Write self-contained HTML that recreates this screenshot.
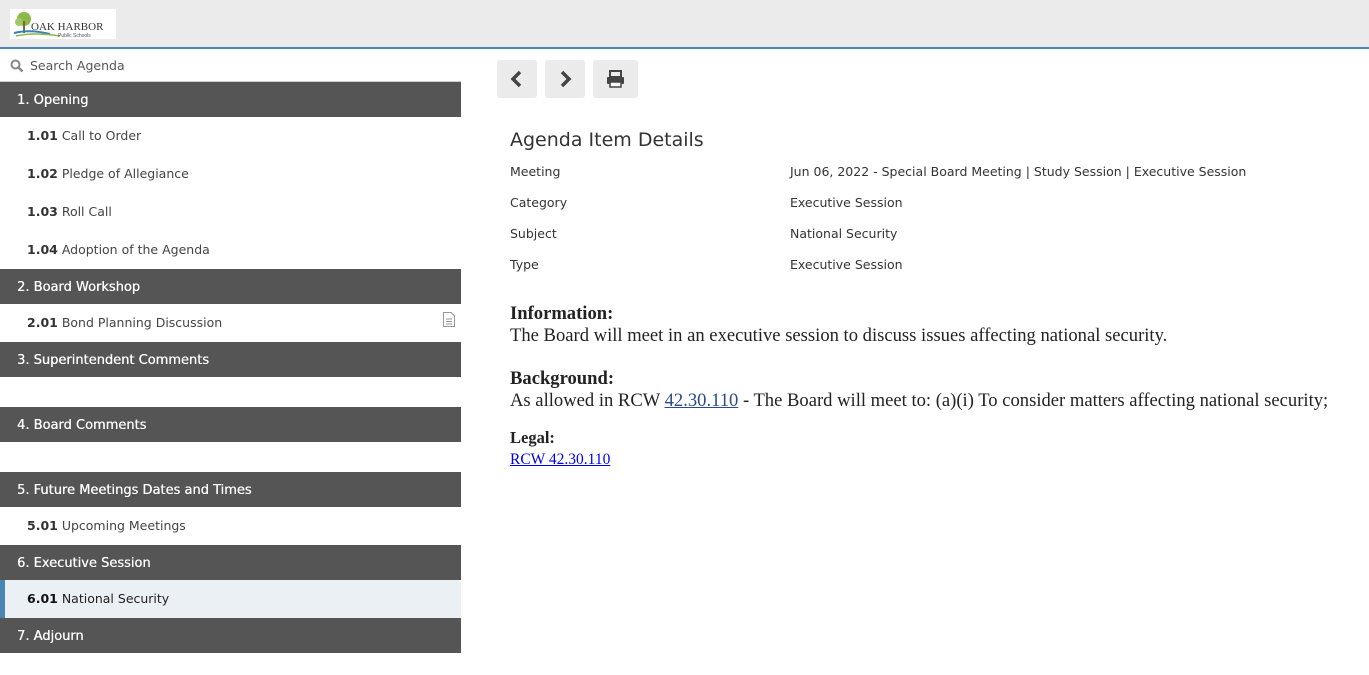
<!DOCTYPE html>
<html><head><meta charset="utf-8"><style>
*{margin:0;padding:0;box-sizing:border-box}
body{width:1369px;height:675px;background:#fff;font-family:"DejaVu Sans","Liberation Sans",sans-serif;color:#333;position:relative;overflow:hidden}
.hdr{position:absolute;left:0;top:0;width:1369px;height:49px;background:#ebebeb;border-bottom:2px solid #4a86b5}
.logo{position:absolute;left:10px;top:9px;width:106px;height:30px;background:#fff}
.a{position:absolute;left:0;width:461px;font-size:12.5px}
.s{background:#555;color:#fff;height:35px;line-height:37px;padding-left:17px;font-size:13px;text-shadow:0.3px 0 0 #fff}
.i{height:38px;line-height:38px;padding-left:27px;color:#444;font-size:12.5px}
.i b{color:#333}
.btn{position:absolute;top:60px;height:38px;background:#ebebeb;border-radius:3px}
.k{position:absolute;left:510px;font-size:12.5px;color:#333}
.v{position:absolute;left:790px;font-size:12.5px;color:#333}
.serif{position:absolute;left:510px;font-family:"Liberation Serif",serif;color:#222}
a{color:#00e;}
</style></head><body>
<div class="hdr"><div class="logo">
<svg width="106" height="30"><circle cx="14" cy="10" r="7" fill="#8cb84a"/><circle cx="9" cy="13" r="4" fill="#a4c765"/><rect x="13" y="12" width="2" height="12" fill="#7a6a3a"/><path d="M4 24 Q20 20 40 25" stroke="#3a7fc0" stroke-width="2" fill="none"/><path d="M6 27 Q24 23 50 27" stroke="#8cb84a" stroke-width="1.5" fill="none"/>
<text x="21" y="21" font-family="Liberation Serif" font-size="11" fill="#333">OAK HARBOR</text><text x="48" y="28" font-family="Liberation Sans" font-size="5" fill="#555">Public Schools</text></svg></div></div>
<div class="a" style="top:50px;height:32px;line-height:32px;padding-left:30px;color:#555;border-bottom:1px solid #ccc">Search Agenda
<svg style="position:absolute;left:10px;top:9px" width="14" height="14"><circle cx="5.5" cy="5.5" r="4" stroke="#888" stroke-width="2" fill="none"/><path d="M8.5 8.5 L12.5 12.5" stroke="#888" stroke-width="2.5"/></svg></div>
<div class="a s" style="top:82px">1. Opening</div>
<div class="a i" style="top:117px"><b>1.01</b> Call to Order</div>
<div class="a i" style="top:155px"><b>1.02</b> Pledge of Allegiance</div>
<div class="a i" style="top:193px"><b>1.03</b> Roll Call</div>
<div class="a i" style="top:231px"><b>1.04</b> Adoption of the Agenda</div>
<div class="a s" style="top:269px">2. Board Workshop</div>
<div class="a i" style="top:304px"><b>2.01</b> Bond Planning Discussion
<svg style="position:absolute;left:442px;top:7px" width="14" height="17"><path d="M1.5 1.5 H9 L12.5 5 V15.5 H1.5 Z" stroke="#999" fill="#fff"/><path d="M4 8h6M4 10.5h6M4 13h6" stroke="#999"/></svg></div>
<div class="a s" style="top:342px">3. Superintendent Comments</div>
<div class="a s" style="top:407px">4. Board Comments</div>
<div class="a s" style="top:472px">5. Future Meetings Dates and Times</div>
<div class="a i" style="top:507px"><b>5.01</b> Upcoming Meetings</div>
<div class="a s" style="top:545px">6. Executive Session</div>
<div class="a i" style="top:580px;background:#ebf0f5;border-left:5px solid #4a86b5;padding-left:22px;color:#222"><b style="color:#111">6.01</b> National Security</div>
<div class="a s" style="top:618px">7. Adjourn</div>

<div class="btn" style="left:497px;width:40px"><svg width="40" height="38"><path d="M23 12 L16 19 L23 26" stroke="#444" stroke-width="3.5" fill="none"/></svg></div>
<div class="btn" style="left:545px;width:40px"><svg width="40" height="38"><path d="M17 12 L24 19 L17 26" stroke="#444" stroke-width="3.5" fill="none"/></svg></div>
<div class="btn" style="left:593px;width:45px"><svg width="45" height="38"><rect x="17" y="11" width="11" height="6" fill="none" stroke="#444" stroke-width="2"/><rect x="14" y="17" width="17" height="7" rx="1" fill="#444"/><rect x="17" y="22" width="11" height="5" fill="#fff" stroke="#444" stroke-width="1.5"/></svg></div>

<div style="position:absolute;left:510px;top:129px;font-size:19px;color:#333">Agenda Item Details</div>
<div class="k" style="top:164px">Meeting</div><div class="v" style="top:164px">Jun 06, 2022 - Special Board Meeting | Study Session | Executive Session</div>
<div class="k" style="top:195px">Category</div><div class="v" style="top:195px">Executive Session</div>
<div class="k" style="top:226px">Subject</div><div class="v" style="top:226px">National Security</div>
<div class="k" style="top:257px">Type</div><div class="v" style="top:257px">Executive Session</div>
<div class="serif" style="top:303px;font-size:18.6px;font-weight:bold">Information:</div>
<div class="serif" style="top:325px;font-size:18.6px">The Board will meet in an executive session to discuss issues affecting national security.</div>
<div class="serif" style="top:368px;font-size:18.6px;font-weight:bold">Background:</div>
<div class="serif" style="top:390px;font-size:18.6px;white-space:nowrap">As allowed in RCW <a href="#" style="color:#2a4a8a">42.30.110</a> - The Board will meet to: (a)(i) To consider matters affecting national security;</div>
<div class="serif" style="top:428px;font-size:16.5px;font-weight:bold">Legal:</div>
<div class="serif" style="top:451px;font-size:15.5px"><a href="#">RCW 42.30.110</a></div>
</body></html>
